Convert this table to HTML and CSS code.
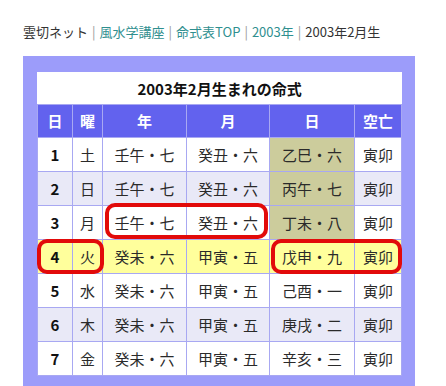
FILE: index.html
```html
<!DOCTYPE html>
<html lang="ja">
<head>
<meta charset="utf-8">
<link rel="stylesheet" href="styles.css">
</head>
<body>
<div class="crumbs">
  <span class="plain">雲切ネット</span><span class="sep">|</span><a href="#">風水学講座</a><span class="sep">|</span><a href="#">命式表TOP</a><span class="sep">|</span><a href="#">2003年</a><span class="sep">|</span><span class="plain">2003年2月生</span>
</div>
<div class="frame">
  <table class="meishiki">
    <colgroup>
      <col class="c1"><col class="c2"><col class="c3"><col class="c4"><col class="c5"><col class="c6">
    </colgroup>
    <tr class="title"><th colspan="6">2003年2月生まれの命式</th></tr>
    <tr class="head"><th>日</th><th>曜</th><th>年</th><th>月</th><th>日</th><th>空亡</th></tr>
    <tr><td class="num">1</td><td>土</td><td>壬午・七</td><td>癸丑・六</td><td class="day">乙巳・六</td><td>寅卯</td></tr>
    <tr class="alt"><td class="num">2</td><td>日</td><td>壬午・七</td><td>癸丑・六</td><td class="day">丙午・七</td><td>寅卯</td></tr>
    <tr><td class="num">3</td><td>月</td><td>壬午・七</td><td>癸丑・六</td><td class="day">丁未・八</td><td>寅卯</td></tr>
    <tr class="today"><td class="num">4</td><td>火</td><td>癸未・六</td><td>甲寅・五</td><td>戊申・九</td><td>寅卯</td></tr>
    <tr><td class="num">5</td><td>水</td><td>癸未・六</td><td>甲寅・五</td><td>己酉・一</td><td>寅卯</td></tr>
    <tr class="alt"><td class="num">6</td><td>木</td><td>癸未・六</td><td>甲寅・五</td><td>庚戌・二</td><td>寅卯</td></tr>
    <tr><td class="num">7</td><td>金</td><td>癸未・六</td><td>甲寅・五</td><td>辛亥・三</td><td>寅卯</td></tr>
  </table>
  <div class="mark mark-a"></div>
  <div class="mark mark-b"></div>
  <div class="mark mark-c"></div>
</div>
</body>
</html>
```

FILE: styles.css
```css
html, body {
  margin: 0;
  padding: 0;
  background: #ffffff;
}
body {
  font-family: "Noto Sans CJK JP", "Noto Sans", sans-serif;
  color: #222;
  overflow: hidden;
}
.crumbs {
  padding: 23px 0 0 23px;
  font-size: 13px;
  line-height: 18px;
  height: 33px;
  white-space: nowrap;
}
.crumbs .plain { color: #333; }
.crumbs a { color: #2f8f8f; text-decoration: none; }
.crumbs .sep { color: #999; margin: 0 4px; }

.frame {
  position: relative;
  margin-left: 23px;
  width: 364px;
  padding: 16px 14px 20px 14px;
  background: #9c9cfa;
}
.meishiki {
  width: 364px;
  border-collapse: collapse;
  table-layout: fixed;
  background: #fff;
  font-size: 15px;
}
.c1 { width: 35px; }
.c2 { width: 30px; }
.c3 { width: 84px; }
.c4 { width: 83px; }
.c5 { width: 85px; }
.c6 { width: 47px; }
.meishiki th, .meishiki td {
  border: 1px solid #a8a8f2;
  text-align: center;
  padding: 0;
  line-height: 20px;
}
.title th {
  height: 31px;
  background: #fff;
  color: #111;
  font-weight: bold;
  font-size: 15px;
  border-color: #fff;
  border-bottom-color: #a8a8f2;
}
.head th {
  height: 32px;
  background: #6262ee;
  color: #fff;
  font-weight: bold;
}
.meishiki td {
  height: 33px;
  color: #2a2a2a;
}
.meishiki td.num {
  font-weight: bold;
  color: #111;
}
.alt td { background: #e9e9f7; }
.meishiki td.day { background: #cccc9c; }
.today td { background: #ffff9c; }

.mark {
  position: absolute;
  border: 4px solid #e20a0a;
  border-radius: 10px;
  box-sizing: border-box;
}
.mark-a { left: 82px; top: 147px; width: 163px; height: 36px; }
.mark-b { left: 14px; top: 183px; width: 67px; height: 35px; }
.mark-c { left: 248px; top: 183px; width: 131px; height: 35px; }
```
